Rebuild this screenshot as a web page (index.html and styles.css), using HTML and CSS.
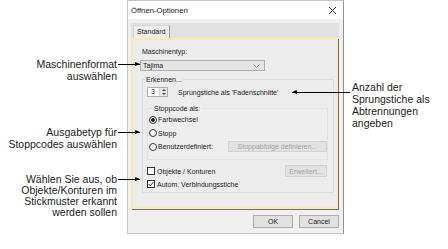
FILE: index.html
```html
<!DOCTYPE html>
<html lang="de">
<head>
    <meta charset="UTF-8">
    <meta name="viewport" content="width=device-width, initial-scale=1.0">
    <title>Öffnen-Optionen</title>
    <link rel="stylesheet" href="styles.css">
</head>
<body>
    <div class="stage">

        <!-- Hinweise links -->
        <div class="notes-left">
            <div class="note note-format">Maschinenformat<br>auswählen<span class="lead lead-right"></span></div>
            <div class="note note-stopp">Ausgabetyp für<br>Stoppcodes auswählen<span class="lead lead-right"></span></div>
            <div class="note note-obj">Wählen Sie aus, ob<br>Objekte/Konturen im<br>Stickmuster erkannt<br>werden sollen<span class="lead lead-right"></span></div>
        </div>

        <!-- Dialog -->
        <div class="dialog">
            <div class="titlebar">
                <span class="title">Öffnen-Optionen</span>
                <svg class="close" width="9" height="9" viewBox="0 0 9 9">
                    <path d="M1 1 L8 8 M8 1 L1 8" stroke="#333" stroke-width="1"/>
                </svg>
            </div>
            <div class="dialog-body">
                <div class="tabstrip">
                    <div class="tab">Standard</div>
                </div>
                <div class="panel">
                    <div class="field-label">Maschinentyp:</div>
                    <div class="select">
                        <span>Tajima</span>
                        <svg width="7" height="4" viewBox="0 0 7 4"><path d="M0.5 0.5 L3.5 3.5 L6.5 0.5" fill="none" stroke="#777" stroke-width="0.8"/></svg>
                    </div>

                    <div class="group group-erkennen">
                        <div class="group-title">Erkennen...</div>
                        <div class="spin-row">
                            <div class="spinner">
                                <span class="spin-value">3</span>
                                <span class="spin-btns">
                                    <svg width="6" height="8" viewBox="0 0 6 8">
                                        <path d="M1 3 L3 1 L5 3 Z M1 5 L3 7 L5 5 Z" fill="#444"/>
                                    </svg>
                                </span>
                            </div>
                            <span class="spin-text">Sprungstiche als 'Fadenschnitte'</span>
                        </div>

                        <div class="group group-stopp">
                            <div class="group-title">Stoppcode als:</div>
                            <div class="opt-row"><span class="radio checked"></span>Farbwechsel</div>
                            <div class="opt-row"><span class="radio"></span>Stopp</div>
                            <div class="opt-row"><span class="radio"></span>Benutzerdefiniert:
                                <span class="btn btn-disabled btn-define">Stoppabfolge definieren...</span>
                            </div>
                        </div>

                        <div class="check-row"><span class="checkbox"></span>Objekte / Konturen
                            <span class="btn btn-disabled btn-more">Erweitert...</span>
                        </div>
                        <div class="check-row"><span class="checkbox checked">
                            <svg width="6" height="6" viewBox="0 0 6 6"><path d="M0.6 3 L2.3 4.8 L5.4 1" fill="none" stroke="#222" stroke-width="0.9"/></svg>
                        </span>Autom. Verbindungsstiche</div>
                    </div>
                </div>
                <div class="actions">
                    <span class="btn">OK</span>
                    <span class="btn">Cancel</span>
                </div>
            </div>
        </div>

        <!-- Hinweis rechts -->
        <div class="notes-right">
            <div class="note note-anzahl">Anzahl der<br>Sprungstiche als<br>Abtrennungen<br>angeben<span class="lead lead-left"></span></div>
        </div>

    </div>
</body>
</html>
```

FILE: styles.css
```css
* {
    box-sizing: border-box;
    margin: 0;
    padding: 0;
}

body {
    background: #ffffff;
    font-family: "Liberation Sans", Arial, sans-serif;
    color: #1a1a1a;
}

.stage {
    display: flex;
    width: 448px;
    height: 249px;
}

/* Hinweistexte */
.notes-left {
    width: 127px;
    padding-right: 10px;
    text-align: right;
}

.note {
    position: relative;
    font-size: 10.5px;
    line-height: 11.5px;
}

.note-format { margin-top: 59px; }
.note-stopp  { margin-top: 45px; }
.note-obj    { margin-top: 24px; line-height: 11px; }

.lead {
    position: absolute;
    top: 5px;
    height: 1px;
    background: #000;
    z-index: 5;
}

.lead::after {
    content: "";
    position: absolute;
    top: -2px;
    border-top: 2.5px solid transparent;
    border-bottom: 2.5px solid transparent;
}

.lead-right {
    left: calc(100% + 1px);
    width: 22px;
}

.lead-right::after {
    right: 0;
    border-left: 5px solid #000;
}

.lead-left {
    left: -60px;
    top: 11px;
    width: 58px;
}

.lead-left::after {
    left: 0;
    border-right: 5px solid #000;
}

.notes-right {
    flex: 1;
    padding-left: 8px;
    text-align: left;
}

.note-anzahl {
    margin-top: 81px;
    line-height: 12px;
}

/* Dialogfenster */
.dialog {
    width: 217px;
    height: 234px;
    background: #f0f0f0;
    border: 1px solid #c4c4c4;
    border-right-color: #8f8f8f;
    font-size: 7px;
}

.titlebar {
    display: flex;
    align-items: center;
    justify-content: space-between;
    height: 18px;
    padding: 0 6px 0 3px;
    background: #ffffff;
}

.title {
    font-size: 7.7px;
}

.dialog-body {
    padding: 4px 4px 0 3px;
}

.tabstrip {
    height: 15px;
    background: #e1e1e1;
    padding: 2px 0 0 2px;
    margin-right: 0;
}

.tab {
    width: 37px;
    height: 13px;
    line-height: 12px;
    padding-left: 3px;
    background: #f0efec;
    border: 1px solid #d4d4d4;
    border-right-color: #9a9a9a;
    border-bottom: none;
}

.panel {
    height: 171px;
    width: 207px;
    background: #ececec;
    border: 2px solid #fde8b0;
    box-shadow: 1px 1px 0 #6f6f6f;
    padding: 0 4px 0 7px;
}

.field-label {
    margin: 7px 0 0 2px;
    line-height: 9px;
}

.select {
    display: flex;
    align-items: center;
    justify-content: space-between;
    margin-top: 4px;
    width: 125px;
    height: 11px;
    padding: 0 4px 0 2px;
    background: #e5e5e5;
    border: 1px solid #adadad;
}

/* Gruppenrahmen */
.group {
    border: 1px solid #dcdcdc;
}

.group-title {
    display: table;
    margin: -5px 0 0 2px;
    padding: 0 1px;
    line-height: 9px;
    background: #ececec;
}

.group-erkennen {
    margin: 8px 0 0 2px;
    width: 192px;
    height: 114px;
}

.spin-row {
    display: flex;
    align-items: center;
    margin: 3px 0 0 4px;
    height: 10px;
}

.spinner {
    display: flex;
    width: 21px;
    height: 10px;
    background: #ffffff;
    border: 1px solid #abadb3;
}

.spin-value {
    flex: 1;
    padding-left: 3px;
    line-height: 8px;
}

.spin-btns {
    display: flex;
    align-items: center;
    justify-content: center;
    width: 8px;
    background: #e8e8e8;
    border-left: 1px solid #cfcfcf;
}

.spin-text {
    margin-left: 10px;
}

.group-stopp {
    margin: 11px 0 0 4px;
    width: 181px;
    height: 52px;
    background: #eeeeee;
    border-color: #e2e2e2;
}

.group-stopp .group-title {
    margin-left: 5px;
    background: #eeeeee;
}

.opt-row,
.check-row {
    display: flex;
    align-items: center;
    height: 13.5px;
}

.opt-row {
    padding-left: 1px;
}

.opt-row:first-of-type {
    margin-top: 3.5px;
}

.radio {
    display: flex;
    align-items: center;
    justify-content: center;
    width: 8px;
    height: 8px;
    margin-right: 1px;
    border: 1px solid #333;
    border-radius: 50%;
    background: #ffffff;
}

.radio.checked::after {
    content: "";
    width: 4px;
    height: 4px;
    border-radius: 50%;
    background: #222;
}

.check-row {
    margin-left: 4px;
    margin-right: 6px;
    height: 13px;
}

.check-row:nth-of-type(4) {
    margin-top: 4.5px;
}

.checkbox {
    display: flex;
    align-items: center;
    justify-content: center;
    width: 8px;
    height: 8px;
    margin-right: 2px;
    border: 1px solid #333;
    background: #ffffff;
}

/* Schaltflächen */
.btn {
    display: flex;
    align-items: center;
    justify-content: center;
    width: 40px;
    height: 13px;
    background: #e1e1e1;
    border: 1px solid #adadad;
}

.btn-disabled {
    color: #a3a3a3;
    background: #e2e2e2;
    border-color: #d2d2d2;
}

.btn-define {
    margin-left: auto;
    width: 99px;
    height: 11px;
}

.btn-more {
    margin-left: auto;
    width: 42px;
    height: 12px;
}

.actions {
    display: flex;
    justify-content: flex-end;
    gap: 6px;
    margin-top: 6px;
    width: 208px;
}
```
